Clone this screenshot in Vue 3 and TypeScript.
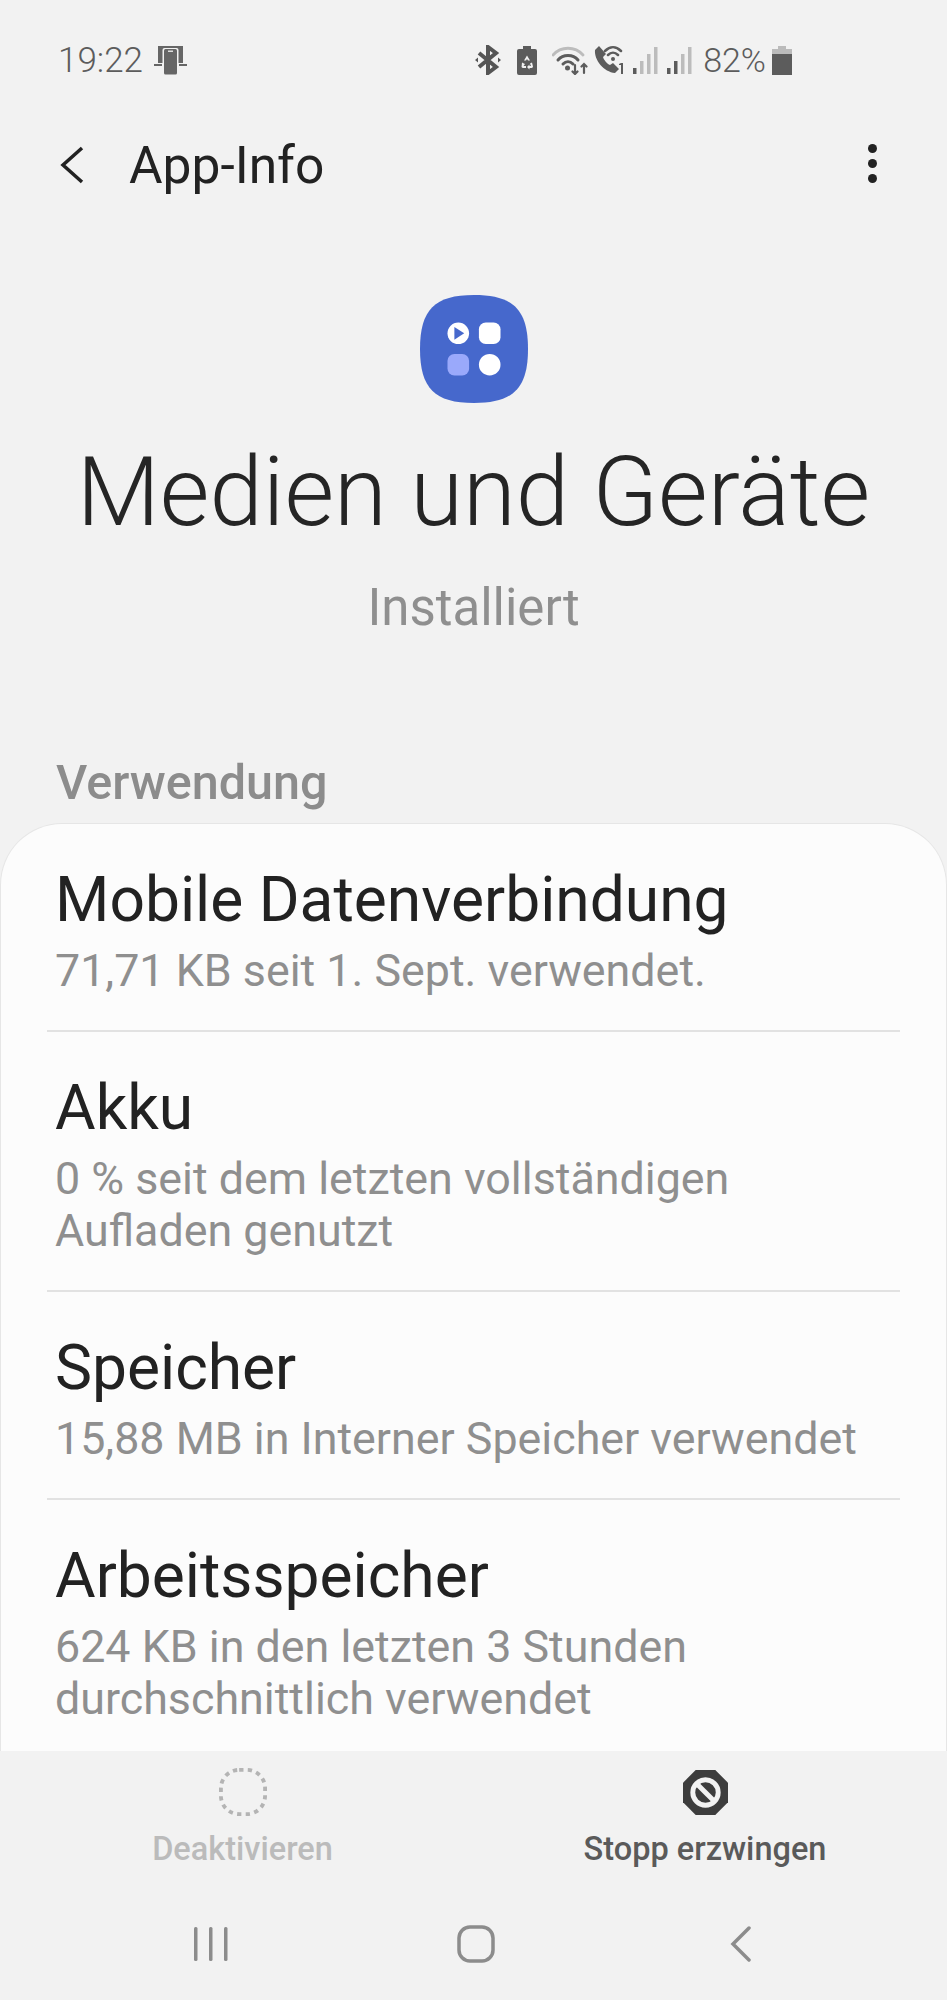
<script setup lang="ts">
type UsageRow = { title: string; lines: string[] };

const rows: UsageRow[] = [
  { title: "Mobile Datenverbindung", lines: ["71,71 KB seit 1. Sept. verwendet."] },
  { title: "Akku", lines: ["0 % seit dem letzten vollständigen", "Aufladen genutzt"] },
  { title: "Speicher", lines: ["15,88 MB in Interner Speicher verwendet"] },
  { title: "Arbeitsspeicher", lines: ["624 KB in den letzten 3 Stunden", "durchschnittlich verwendet"] },
];
</script>

<template>
  <div class="screen">
    <header class="status">
      <div class="status__left">
        <span class="status__time">19:22</span>
        <svg class="ic-cast" width="33" height="30" viewBox="0 0 33 30">
          <path d="M4 1h25v17H4z" fill="#666" />
          <path d="M0 19h8v2H0zM25 19h8v2h-8z" fill="#666" />
          <rect x="8.500" y="3" width="16" height="27" rx="2" fill="#f2f2f2" />
          <rect x="10" y="4" width="13" height="25.500" rx="1.500" fill="#666" />
          <rect x="14" y="5.500" width="5" height="1.500" fill="#ddd" />
        </svg>
      </div>
      <div class="status__right">
        <svg width="26" height="30" viewBox="0 0 26 30" fill="none" stroke="#555" stroke-width="4">
          <path d="M4 8l17 14-8 6V2l8 6L4 22" />
          <path d="M0 15l3-2.500v5zM26 15l-3-2.500v5z" fill="#555" stroke="none" />
        </svg>
        <svg class="gap-a" width="20" height="29" viewBox="0 0 20 29">
          <path d="M6 0h8v3h4a2 2 0 0 1 2 2v22a2 2 0 0 1-2 2H2a2 2 0 0 1-2-2V5a2 2 0 0 1 2-2h4z" fill="#5c5c5c" />
          <path d="M10 9.500l3 5h-2l-1-1.500-1 1.500H7zM5 16.500l3 1.500-1.500 2H9v2H6a1.500 1.500 0 0 1-1.300-2.200zM15 16.500l.8 3.300a1.500 1.500 0 0 1-1.300 2.200H12.500v1.500L10 21l2.500-2.500v1.500h1.500l-1-2.500z" fill="#f2f2f2" />
        </svg>
        <svg class="gap-b" width="37" height="29" viewBox="0 0 37 29" fill="none" stroke-linecap="round">
          <path d="M1 9C9 0 23 0 31 9" stroke="#bcbcbc" stroke-width="2.800" />
          <path d="M6 14C11 8 21 8 26 14" stroke="#5c5c5c" stroke-width="3" />
          <path d="M11 18c3-3 7-3 10 0" stroke="#5c5c5c" stroke-width="3" />
          <circle cx="15.500" cy="22" r="2.500" fill="#5c5c5c" />
          <path d="M23 19v9M20.500 25.500l2.500 2.500 2.500-2.500M32 27V18M29.500 20.500l2.500-2.500 2.500 2.500" stroke="#5c5c5c" stroke-width="2.200" />
        </svg>
        <svg class="gap-c" width="32" height="30" viewBox="0 0 32 30">
          <path d="M5 1L1 5c-1 10 9 22 20 23l4-4-6-6-3 2c-3-1-6-5-7-8l3-3z" fill="#5c5c5c" />
          <path d="M11 6c5-5 11-5 16 0M14 10c3-3 7-3 10 0" fill="none" stroke="#5c5c5c" stroke-width="2.500" stroke-linecap="round" />
          <circle cx="19" cy="14" r="2" fill="#5c5c5c" />
          <path d="M27 18h2v11h-2v-9h-2v-1z" fill="#5c5c5c" />
        </svg>
        <svg class="gap-d" width="25" height="27" viewBox="0 0 25 27">
          <rect x="0" y="21" width="3.500" height="6" fill="#5c5c5c" />
          <rect x="7" y="14" width="3.500" height="13" fill="#bcbcbc" />
          <rect x="14" y="7" width="3.500" height="20" fill="#bcbcbc" />
          <rect x="21" y="0" width="3.500" height="27" fill="#bcbcbc" />
        </svg>
        <svg class="gap-e" width="25" height="27" viewBox="0 0 25 27">
          <rect x="0" y="21" width="3.500" height="6" fill="#5c5c5c" />
          <rect x="7" y="14" width="3.500" height="13" fill="#5c5c5c" />
          <rect x="14" y="7" width="3.500" height="20" fill="#bcbcbc" />
          <rect x="21" y="0" width="3.500" height="27" fill="#bcbcbc" />
        </svg>
        <span class="status__pct">82%</span>
        <svg class="gap-f" width="20" height="29" viewBox="0 0 20 29">
          <path d="M6 0h8v3h6v5H0V3h6z" fill="#bbb" />
          <rect x="0" y="8" width="20" height="21" fill="#5c5c5c" />
        </svg>
      </div>
    </header>

    <div class="toolbar">
      <svg class="toolbar__back" width="24" height="38" viewBox="0 0 24 38" fill="none" stroke="#222" stroke-width="3.500">
        <path d="M22 2L3 19l19 17" />
      </svg>
      <h1 class="toolbar__title">App-Info</h1>
      <div class="toolbar__more">
        <i></i><i></i><i></i>
      </div>
    </div>

    <section class="hero">
      <svg class="hero__icon" width="108" height="108" viewBox="0 0 110 110">
        <path d="M55 0C95 0 110 15 110 55S95 110 55 110 0 95 0 55 15 0 55 0z" fill="#4668cc" />
        <circle cx="39" cy="39" r="11" fill="#fff" />
        <path d="M35 32.500l10 6.500-10 6.500z" fill="#4668cc" />
        <rect x="60" y="28" width="22" height="22" rx="7" fill="#fff" />
        <rect x="28" y="60" width="22" height="22" rx="7" fill="#9aa9fb" />
        <circle cx="71" cy="71" r="11" fill="#fff" />
      </svg>
      <h2 class="hero__name">Medien und Geräte</h2>
      <p class="hero__state">Installiert</p>
    </section>

    <h3 class="section-label">Verwendung</h3>

    <main class="card">
      <div v-for="row in rows" :key="row.title" class="row">
        <div class="row__title">{{ row.title }}</div>
        <div v-for="line in row.lines" :key="line" class="row__line">{{ line }}</div>
      </div>
    </main>

    <div class="actions">
      <div class="action action--off">
        <div class="action__icon">
          <svg width="48" height="48" viewBox="0 0 50 50" fill="none" stroke="#b4b4b4" stroke-width="4" stroke-dasharray="4.500 4.500">
            <rect x="2" y="2" width="46" height="46" rx="19" />
          </svg>
        </div>
        <span>Deaktivieren</span>
      </div>
      <div class="action">
        <div class="action__icon">
          <svg width="45" height="45" viewBox="0 0 46 46">
            <path d="M13 0h20l13 13v20L33 46H13L0 33V13z" fill="#3d3d3d" />
            <circle cx="23" cy="23" r="13" fill="none" stroke="#f2f2f2" stroke-width="5" />
            <path d="M14 14l18 18" stroke="#f2f2f2" stroke-width="5" />
          </svg>
        </div>
        <span>Stopp erzwingen</span>
      </div>
    </div>

    <nav class="navbar">
      <svg width="34" height="36" viewBox="0 0 34 36" fill="#8c8c8c">
        <rect x="0" y="1" width="3.500" height="34" rx="1.500" />
        <rect x="15" y="1" width="3.500" height="34" rx="1.500" />
        <rect x="30" y="1" width="3.500" height="34" rx="1.500" />
      </svg>
      <svg width="38" height="38" viewBox="0 0 38 38" fill="none" stroke="#8c8c8c" stroke-width="3.500">
        <rect x="2" y="2" width="34" height="34" rx="11" />
      </svg>
      <svg width="24" height="36" viewBox="0 0 24 36" fill="none" stroke="#8c8c8c" stroke-width="3.500" stroke-linecap="round">
        <path d="M20 2L4 18l16 16" />
      </svg>
    </nav>
  </div>
</template>

<style scoped>
.screen {
  width: 947px;
  height: 2000px;
  overflow: hidden;
  background: #f2f2f2;
  font-family: Roboto, "Liberation Sans", sans-serif;
  display: flex;
  flex-direction: column;
}

.status {
  height: 60px;
  margin-top: 30px;
  padding: 0 155px 0 58px;
  display: flex;
  justify-content: space-between;
  align-items: center;
  color: #5c5c5c;
}

.status__left,
.status__right {
  display: flex;
  align-items: center;
}

.status__time {
  font-size: 35px;
  font-weight: 300;
}

.ic-cast {
  margin-left: 11px;
}

.gap-a { margin-left: 16px; }
.gap-b { margin-left: 15px; }
.gap-c { margin-left: 5px; }
.gap-d { margin-left: 7px; }
.gap-e { margin-left: 9px; }
.gap-f { margin-left: 6px; }

.status__pct {
  margin-left: 11px;
  font-size: 34px;
  font-weight: 300;
}

.toolbar {
  height: 84px;
  margin-top: 33px;
  padding: 0 70px 0 60px;
  display: flex;
  align-items: center;
}

.toolbar__title {
  margin: 0 0 0 45px;
  font-size: 51.500px;
  font-weight: 400;
  color: #222;
}

.toolbar__more {
  margin-left: auto;
  display: flex;
  flex-direction: column;
  gap: 6px;
  margin-top: -4px;
}

.toolbar__more i {
  display: block;
  width: 9px;
  height: 9px;
  border-radius: 50%;
  background: #222;
}

.hero {
  margin-top: 88px;
  display: flex;
  flex-direction: column;
  align-items: center;
}

.hero__name {
  margin: 33px 0 0;
  font-size: 96px;
  line-height: 112px;
  font-weight: 300;
  color: #252525;
}

.hero__state {
  margin: 30px 0 0;
  font-size: 51px;
  line-height: 60px;
  color: #8f8f8f;
}

.section-label {
  margin: 117px 0 0 56px;
  font-size: 48.500px;
  line-height: 56px;
  font-weight: 500;
  color: #8c8c8c;
}

.card {
  height: 928px;
  margin-top: 12px;
  box-sizing: border-box;
  padding: 0 46px;
  background: #fcfcfc;
  border: 1px solid #e6e6e6;
  border-bottom: none;
  border-radius: 62px 62px 0 0;
  overflow: hidden;
  flex: none;
}

.row {
  padding: 39px 0 33px;
  border-bottom: 2px solid #e2e2e2;
}

.row:last-child {
  border-bottom: none;
}

.row__title,
.row__line {
  margin-left: 8px;
  white-space: nowrap;
}

.row__title {
  font-size: 62.300px;
  line-height: 74px;
  color: #222;
}

.row__line {
  font-size: 44.800px;
  line-height: 52px;
  color: #8f8f8f;
}

.row__title + .row__line {
  margin-top: 8px;
}

.actions {
  display: grid;
  grid-template-columns: 485px 440px;
  padding-top: 16px;
  flex: none;
}

.action {
  display: flex;
  flex-direction: column;
  align-items: center;
  gap: 12px;
  font-size: 32.500px;
  line-height: 40px;
  font-weight: 500;
  color: #5a5a5a;
}

.action--off {
  color: #bbb;
}

.action__icon {
  height: 50px;
  display: flex;
  align-items: center;
  justify-content: center;
}

.navbar {
  margin-top: 56px;
  display: grid;
  grid-template-columns: repeat(3, 265px);
  padding-left: 78px;
  align-items: center;
  justify-items: center;
}
</style>

<style>
html,
body {
  background: #f2f2f2;
}
</style>
